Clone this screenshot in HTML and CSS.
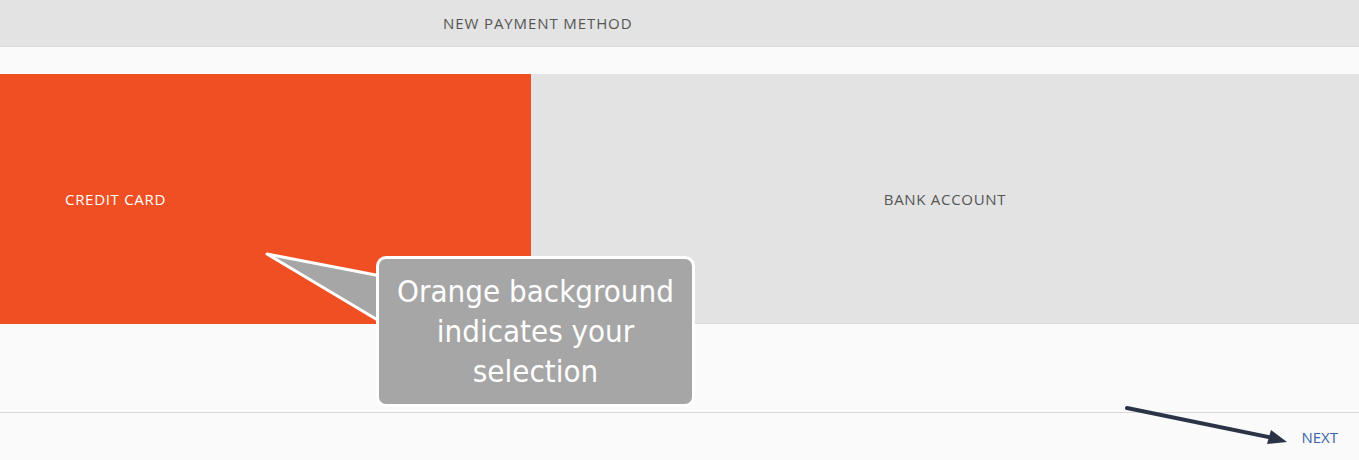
FILE: index.html
```html
<!DOCTYPE html>
<html lang="en">
<head>
    <meta charset="UTF-8">
    <title>New payment method</title>
    <link rel="stylesheet" href="styles.css">
</head>
<body>
    <div class="top-bar">
        <h1 class="title">NEW PAYMENT METHOD</h1>
    </div>

    <div class="page-container">
        <div class="methods">
            <div class="method method-selected">CREDIT CARD</div>
            <div class="method">BANK ACCOUNT</div>
        </div>
        <div class="spacer"></div>
        <div class="footer">
            <a href="#" class="next-btn">NEXT</a>
        </div>

        <!-- annotation overlays -->
        <svg class="callout-tail" width="130" height="80" viewBox="0 0 130 80">
            <polygon points="4,2 118,24 118,70" fill="#a6a6a6" stroke="#fff" stroke-width="3" stroke-linejoin="round"/>
        </svg>
        <div class="callout">Orange background indicates your selection</div>
        <svg class="hint-arrow" width="180" height="50" viewBox="0 0 180 50">
            <line x1="4" y1="8" x2="150" y2="38" stroke="#2b3447" stroke-width="4" stroke-linecap="round"/>
            <polygon points="164,42 144,44 148,30" fill="#2b3447"/>
        </svg>
    </div>
</body>
</html>
```

FILE: styles.css
```css
:root {
    --orange: #f04f23;
    --panel: #e3e3e3;
    --page: #fafafa;
    --line: #d9d9d9;
    --text-dark: #555;
    --link: #3b63a8;
}

* {
    margin: 0;
    padding: 0;
    box-sizing: border-box;
}

body {
    background: var(--page);
    font-family: 'Open Sans', Arial, sans-serif;
    height: 460px;
    overflow: hidden;
}

.top-bar {
    background: var(--panel);
    border-bottom: 1px solid var(--line);
    height: 47px;
    display: flex;
    align-items: center;
    padding-left: 443px;
}

.title {
    font-weight: 400;
    font-size: 15px;
    letter-spacing: 0.9px;
    color: var(--text-dark);
}

.page-container {
    position: relative;
    padding-top: 27px;
}

.methods {
    display: flex;
    height: 250px;
}

.method {
    flex: 1;
    display: flex;
    align-items: center;
    justify-content: center;
    background: var(--panel);
    border-bottom: 1px solid var(--line);
    font-size: 15px;
    letter-spacing: 0.7px;
    color: var(--text-dark);
}

.method-selected {
    flex: 0 0 531px;
    justify-content: flex-start;
    padding-left: 65px;
    background: var(--orange);
    border-bottom-color: var(--orange);
    color: #fff;
}

.spacer {
    height: 89px;
    border-bottom: 1px solid var(--line);
}

.footer {
    height: 47px;
    display: flex;
    align-items: center;
    justify-content: flex-end;
    padding-right: 21px;
}

.next-btn {
    color: var(--link);
    text-decoration: none;
    font-size: 15px;
}

.callout {
    position: absolute;
    left: 376px;
    top: 209px;
    width: 319px;
    height: 151px;
    background: #a6a6a6;
    border: 3px solid #fff;
    border-radius: 10px;
    color: #fff;
    font-family: 'DejaVu Sans Condensed', 'DejaVu Sans', sans-serif;
    font-size: 31px;
    line-height: 40px;
    text-align: center;
    padding: 12px 16px 0;
}

.callout-tail {
    position: absolute;
    left: 263px;
    top: 205px;
}

.hint-arrow {
    position: absolute;
    left: 1123px;
    top: 353px;
}
```
